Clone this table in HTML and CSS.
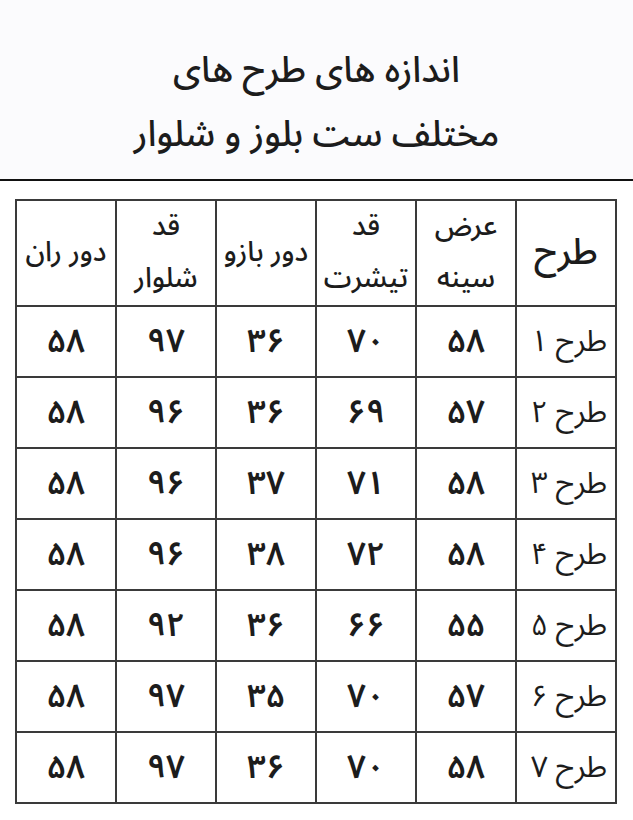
FILE: index.html
```html
<!DOCTYPE html>
<html lang="fa" dir="rtl">
<head>
<meta charset="utf-8">
<link rel="stylesheet" href="styles.css">
</head>
<body>
<header class="title">
  <h1 class="title-text">اندازه های طرح های<br>مختلف ست بلوز و شلوار</h1>
</header>
<main class="content">
  <table class="sizes">
    <colgroup>
      <col class="col"><col class="col"><col class="col"><col class="col"><col class="col"><col class="col">
    </colgroup>
    <thead>
      <tr>
        <th class="first big">طرح</th>
        <th>عرض<br>سینه</th>
        <th>قد<br>تیشرت</th>
        <th>دور بازو</th>
        <th>قد<br>شلوار</th>
        <th>دور ران</th>
      </tr>
    </thead>
    <tbody>
      <tr><td class="first">طرح ۱</td><td>۵۸</td><td>۷۰</td><td>۳۶</td><td>۹۷</td><td>۵۸</td></tr>
      <tr><td class="first">طرح ۲</td><td>۵۷</td><td>۶۹</td><td>۳۶</td><td>۹۶</td><td>۵۸</td></tr>
      <tr><td class="first">طرح ۳</td><td>۵۸</td><td>۷۱</td><td>۳۷</td><td>۹۶</td><td>۵۸</td></tr>
      <tr><td class="first">طرح ۴</td><td>۵۸</td><td>۷۲</td><td>۳۸</td><td>۹۶</td><td>۵۸</td></tr>
      <tr><td class="first">طرح ۵</td><td>۵۵</td><td>۶۶</td><td>۳۶</td><td>۹۲</td><td>۵۸</td></tr>
      <tr><td class="first">طرح ۶</td><td>۵۷</td><td>۷۰</td><td>۳۵</td><td>۹۷</td><td>۵۸</td></tr>
      <tr><td class="first">طرح ۷</td><td>۵۸</td><td>۷۰</td><td>۳۶</td><td>۹۷</td><td>۵۸</td></tr>
    </tbody>
  </table>
</main>
<div class="footer-band"></div>
</body>
</html>
```

FILE: styles.css
```css
html, body {
  margin: 0;
  padding: 0;
  background: #ffffff;
}
body {
  font-family: "Noto Sans Arabic", "DejaVu Sans", sans-serif;
  color: #1c1c1c;
}
.title {
  background: #fbfbfd;
  height: 181px;
  box-sizing: border-box;
  padding-top: 39px;
  border-bottom: 2px solid #111;
  text-align: center;
}
.title-text {
  margin: 0;
  font-size: 36px;
  font-weight: 500;
  line-height: 64px;
  white-space: nowrap;
}
.content {
  padding: 18px 16px 0 16px;
}
.sizes {
  width: 599px;
  border-collapse: collapse;
  border: 2px solid #222;
  table-layout: fixed;
}
.col {
  width: 100px;
}
.sizes th, .sizes td {
  border: 2px solid #3a3a3a;
  text-align: center;
  vertical-align: middle;
  padding: 0;
}
.sizes th {
  height: 104px;
  font-weight: 500;
  font-size: 28px;
  line-height: 52px;
}
.sizes th.big {
  font-size: 36px;
}
.sizes td {
  height: 68.55px;
  font-size: 33px;
  font-weight: 600;
}
.sizes td.first {
  text-align: right;
  padding-right: 8px;
  font-weight: normal;
  font-size: 30px;
}
.footer-band {
  margin-top: 16px;
  height: 10px;
  background: #f3f3f5;
}
```
